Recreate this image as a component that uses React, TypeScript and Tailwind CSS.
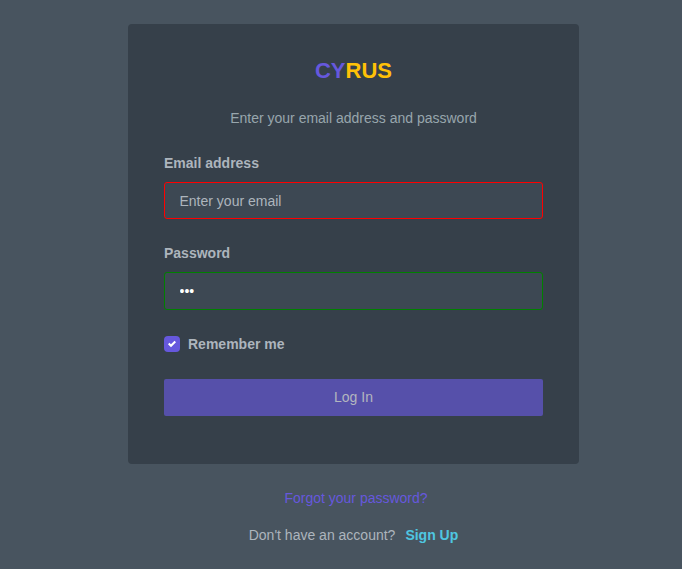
export default function App() {
  return (
    <main className="flex min-h-[569px] flex-col bg-[#48545f] pt-6 pr-[103px] pl-32 font-['Liberation_Sans',Arial,sans-serif] text-[14px] leading-[22px] text-[#adb5bd]">
      <section className="h-[440px] w-[451px] rounded-[4px] bg-[#36404a] px-9 pt-[31px]">
        <h1 className="h-8 text-center text-[22px] leading-8 font-bold text-[#ffc107]">
          <span className="text-[#6658dd]">CY</span>RUS
        </h1>
        <p className="mt-5 text-center text-[#98a6ad]">Enter your email address and password</p>
        <form className="mt-[23px]" onSubmit={(e) => e.preventDefault()}>
          <label htmlFor="email" className="block font-bold">Email address</label>
          <input id="email" type="email" placeholder="Enter your email" className="mt-2 block h-[37px] w-full rounded-[3px] border border-[#ff0000] bg-[#3d4853] px-[14.5px] placeholder:text-[#adb5bd] placeholder:opacity-100 outline-none" />
          <label htmlFor="password" className="mt-[23px] block font-bold">Password</label>
          <input id="password" type="password" defaultValue="abc" className="mt-2 block h-[38px] w-full rounded-[3px] border border-[#008000] bg-[#3d4853] px-[14.5px] text-white outline-none" />
          <label className="mt-[23px] flex items-center gap-2 font-bold">
            <span className="flex size-4 items-center justify-center rounded-[4px] bg-[#6658dd]">
              <svg viewBox="0 0 8 8" className="size-2 fill-white"><path d="M6.564.75l-3.59 3.612-1.538-1.55L0 4.26 2.974 7.25 8 2.193z" /></svg>
            </span>
            Remember me
          </label>
          <button type="submit" className="mt-6 block h-[37px] w-full rounded-[2px] bg-[#5650aa] pb-px text-[#b3b6bf]">Log In</button>
        </form>
      </section>
      <footer className="w-[451px] pt-[23px] text-center">
        <a href="#" className="block pl-[5px] text-[#6658dd]">Forgot your password?</a>
        <p className="mt-[15px]">Don't have an account?<a href="#" className="ml-[10px] font-bold text-[#4fc6e1]">Sign Up</a></p>
      </footer>
    </main>
  );
}
